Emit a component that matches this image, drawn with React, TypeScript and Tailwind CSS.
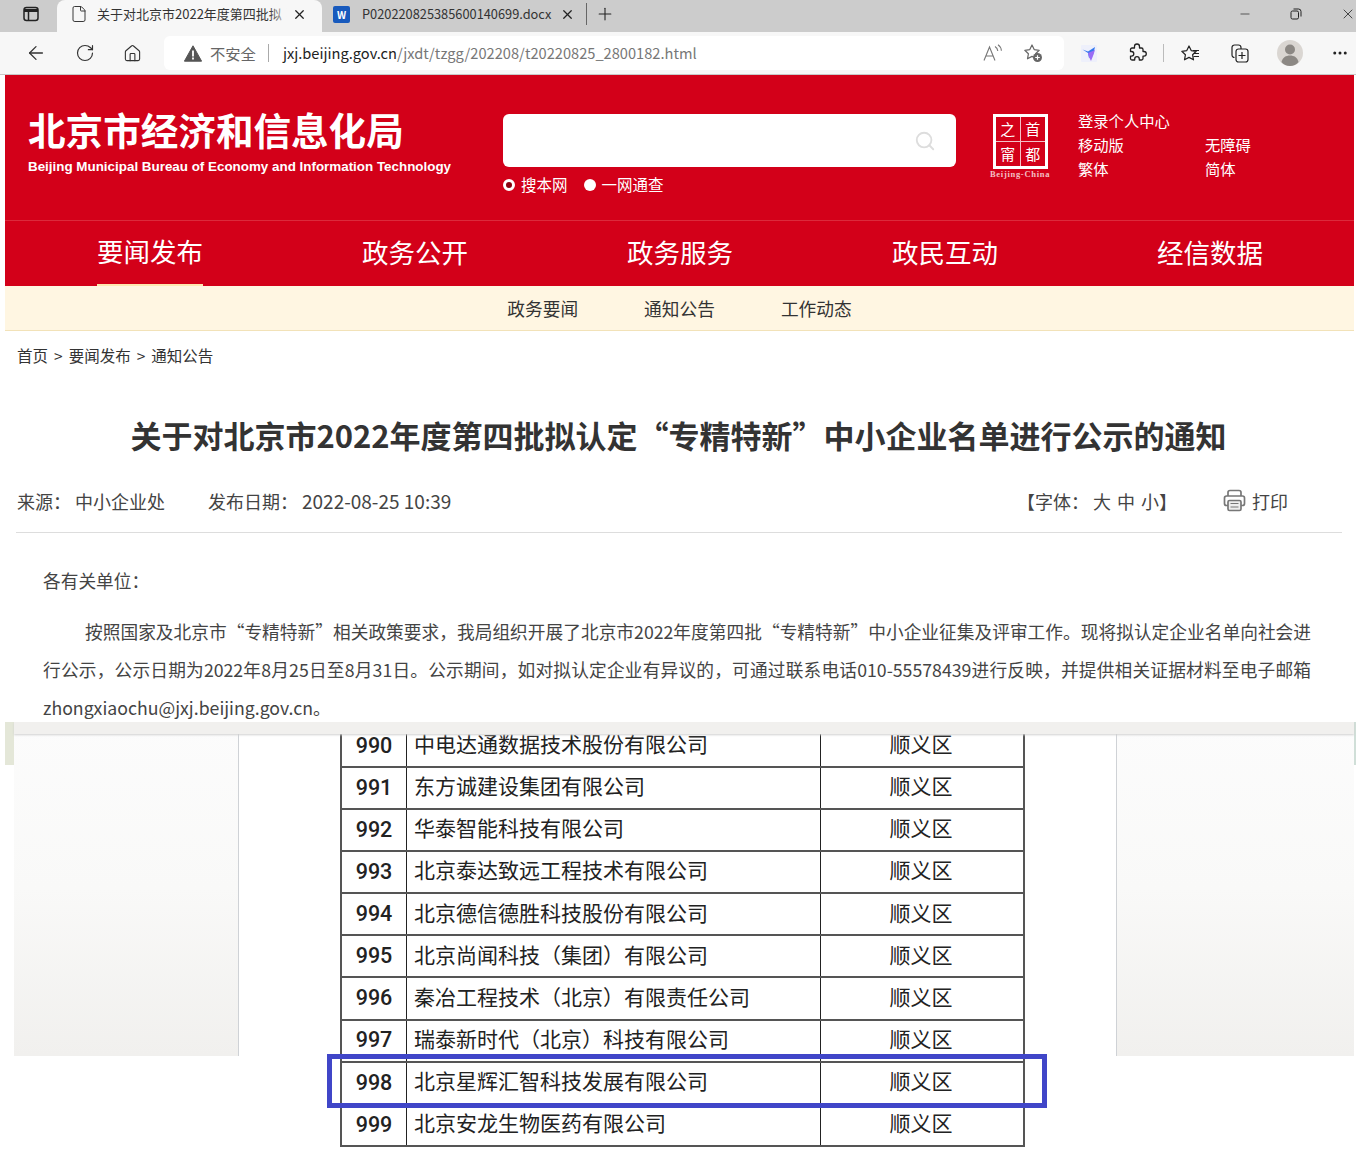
import { ArrowLeft, RotateCw, House, Ellipsis, Minus, Plus, X, File, Search } from 'lucide-react';

const FONT = '"Noto Sans CJK SC", "Liberation Sans", sans-serif';
const STAR = 'M9 2l2.2 4.6 5 .7-3.6 3.5.9 5L9 13.4 4.5 15.8l.9-5L1.8 7.3l5-.7z';
const navItems = ['要闻发布', '政务公开', '政务服务', '政民互动', '经信数据'];
const subNav = ['政务要闻', '通知公告', '工作动态'];
const rows = [
  ['990', '中电达通数据技术股份有限公司'],
  ['991', '东方诚建设集团有限公司'],
  ['992', '华泰智能科技有限公司'],
  ['993', '北京泰达致远工程技术有限公司'],
  ['994', '北京德信德胜科技股份有限公司'],
  ['995', '北京尚闻科技（集团）有限公司'],
  ['996', '秦冶工程技术（北京）有限责任公司'],
  ['997', '瑞泰新时代（北京）科技有限公司'],
  ['998', '北京星辉汇智科技发展有限公司'],
  ['999', '北京安龙生物医药有限公司'],
];

const TabListIcon = () => (
  <svg width="16" height="16" viewBox="0 0 16 16" fill="none" stroke="#222" strokeWidth="1.5">
    <rect x="1" y="1.5" width="14" height="13" rx="2.5" />
    <path d="M1 4.5h14" strokeWidth="3" />
    <path d="M5.5 4v10" />
  </svg>
);

const RestoreIcon = () => (
  <svg width="12" height="12" viewBox="0 0 12 12" fill="none" stroke="#222" strokeWidth="1">
    <rect x="1" y="3" width="7.5" height="8" rx="1.5" />
    <path d="M3.5 1h5a2.5 2.5 0 0 1 2.5 2.5V8.5" />
  </svg>
);

const WarningIcon = () => (
  <svg width="18" height="17" viewBox="0 0 18 17">
    <path d="M9 .8L17.6 16.2H.4z" fill="#555" stroke="#555" strokeLinejoin="round" />
    <path d="M8.1 5.5h1.8v6H8.1zM8.1 12.6h1.8v1.8H8.1z" fill="#fff" />
  </svg>
);

const ReadAloudIcon = () => (
  <svg width="20" height="18" viewBox="0 0 20 18" fill="none" stroke="#777" strokeWidth="1.1">
    <path d="M1 16.5L6.5 3l5.5 13.5M3 12h7" />
    <path d="M12 2.5c1.8 1 2.6 2.4 2.8 4.5M15 .8c2.2 1.4 3.2 3.2 3.4 6" />
  </svg>
);

const StarAddIcon = () => (
  <svg width="20" height="20" viewBox="0 0 20 20" fill="none">
    <path d={STAR} stroke="#666" strokeWidth="1.2" strokeLinejoin="round" />
    <circle cx="14.5" cy="14.5" r="4.5" fill="#666" />
    <path d="M14.5 12.2v4.6M12.2 14.5h4.6" stroke="#fff" strokeWidth="1.2" />
  </svg>
);

const BirdIcon = () => (
  <svg width="16" height="17" viewBox="0 0 16 17">
    <rect width="16" height="17" rx="1" fill="#eef0fb" />
    <path d="M1.5 4.5L7 6.5 14 2l-2 8-4 3-1-5z" fill="#3478f0" />
    <path d="M7 8l7-3-2 6-2 5-2-4z" fill="#9a6cf5" />
  </svg>
);

const ExtensionIcon = () => (
  <svg width="20" height="20" viewBox="0 0 20 20" fill="none" stroke="#222" strokeWidth="1.3" strokeLinejoin="round">
    <path d="M7.5 3.5a2.5 2.5 0 0 1 5 0V5h2a1.5 1.5 0 0 1 1.5 1.5v2h1a2.3 2.3 0 0 1 0 4.6h-1v2.4a1.5 1.5 0 0 1-1.5 1.5h-2.2v-1a2.3 2.3 0 0 0-4.6 0v1H5a1.5 1.5 0 0 1-1.5-1.5v-2.4h1a2.3 2.3 0 0 0 0-4.6h-1v-2A1.5 1.5 0 0 1 5 5h2.5z" />
  </svg>
);

const FavoritesIcon = () => (
  <svg width="20" height="18" viewBox="0 0 20 18" fill="none" stroke="#222" strokeWidth="1.2" strokeLinejoin="round">
    <path d={STAR} />
    <path d="M13 6.5h6M14 9.5h5M13.5 12.5h5.5" />
  </svg>
);

const CollectionsIcon = () => (
  <svg width="18" height="19" viewBox="0 0 18 19" fill="none" stroke="#222" strokeWidth="1.2">
    <path d="M3.5 13.5A2.5 2.5 0 0 1 1 11V3.5A2.5 2.5 0 0 1 3.5 1h4A2.5 2.5 0 0 1 10 3.5V5" />
    <rect x="5" y="5" width="12" height="13" rx="2.5" />
    <path d="M11 8v7M7.5 11.5h7" />
  </svg>
);

const AvatarIcon = () => (
  <svg width="26" height="26" viewBox="0 0 26 26">
    <ellipse cx="13" cy="13" rx="13" ry="13" fill="#dad6d2" />
    <circle cx="13" cy="9.5" r="5" fill="#8c8884" />
    <path d="M4.5 22c1-4.5 4.5-6.5 8.5-6.5s7.5 2 8.5 6.5c-2 2.5-5 4-8.5 4s-6.5-1.5-8.5-4z" fill="#8c8884" />
  </svg>
);

const PrintIcon = () => (
  <svg width="23" height="23" viewBox="0 0 23 23" fill="none" stroke="#777" strokeWidth="1.7" strokeLinejoin="round">
    <path d="M5 7V3.5A2 2 0 0 1 7 1.5h9a2 2 0 0 1 2 2V7" />
    <path d="M5 16.5H3.5a2 2 0 0 1-2-2V9a2 2 0 0 1 2-2h16a2 2 0 0 1 2 2v5.5a2 2 0 0 1-2 2H18" />
    <rect x="5" y="11.5" width="13" height="10" rx="1.5" fill="#eee" />
    <path d="M7.5 14.5h8M7.5 18h8" strokeWidth="1.2" />
  </svg>
);

const BrowserChrome = () => (
  <div className="h-[75px] w-full shrink-0 border-b border-[#c8c8c8] bg-[#f7f7f7]">
    <div className="flex h-8 items-end bg-[#cccccc] pl-[5px]">
      <div className="flex h-8 w-[52px] items-center justify-center pb-[4px]">
        <TabListIcon />
      </div>
      <div className="flex h-8 w-[265px] items-center rounded-t-lg bg-[#f7f7f7] pb-[4px] pl-[13px]">
        <File size={18} strokeWidth={1.3} className="text-[#333]" />
        <div className="relative ml-[9px] w-[194px]">
          <span className="block whitespace-nowrap text-[13px] leading-[18px] text-[#333]">关于对北京市2022年度第四批拟</span>
          <div className="absolute inset-y-0 right-0 w-[22px] bg-gradient-to-r from-transparent to-[#f7f7f7]" />
        </div>
        <X size={15} strokeWidth={2} className="ml-[1px] text-[#222]" />
      </div>
      <div className="flex h-8 items-center pb-[4px] pl-[11px]">
        <div className="flex h-[17px] w-[17px] items-center justify-center rounded-[2px] bg-[#185abd] text-[10px] font-bold text-white">W</div>
        <span className="ml-[12px] w-[198px] whitespace-nowrap text-[12.8px] text-[#333]">P020220825385600140699.docx</span>
        <X size={15} strokeWidth={2} className="text-[#222]" />
        <div className="ml-[11px] h-[22px] w-px bg-[#666]" />
        <Plus size={20} strokeWidth={1.3} className="ml-[8px] text-[#222]" />
      </div>
      <div className="ml-auto flex h-8 items-center gap-[38px] pb-[4px] text-[#222]">
        <Minus size={14} strokeWidth={1.2} />
        <RestoreIcon />
        <X size={16} strokeWidth={1.2} />
      </div>
    </div>
    <div className="flex h-[42px] items-center pl-[25px]">
      <ArrowLeft size={22} strokeWidth={1.4} className="text-[#333]" />
      <RotateCw size={20} strokeWidth={1.4} className="ml-[28px] text-[#333]" />
      <House size={19} strokeWidth={1.4} className="ml-[28px] text-[#333]" />
      <div className="ml-[22px] flex h-[34px] w-[900px] items-center rounded-md bg-white pl-[20px]">
        <WarningIcon />
        <span className="ml-[8px] text-[15.3px] text-[#666]">不安全</span>
        <div className="ml-[12px] h-[18px] w-px bg-[#aaa]" />
        <span className="ml-[14px] whitespace-nowrap text-[14.65px]"><span className="text-[#222]">jxj.beijing.gov.cn</span><span className="text-[#777]">/jxdt/tzgg/202208/t20220825_2800182.html</span></span>
        <div className="ml-auto flex items-center gap-[20px] pr-[21px]">
          <ReadAloudIcon />
          <StarAddIcon />
        </div>
      </div>
      <div className="ml-[17px]"><BirdIcon /></div>
      <div className="ml-[30px]"><ExtensionIcon /></div>
      <div className="ml-[16px] h-[18px] w-px bg-[#bbb]" />
      <div className="ml-[16px]"><FavoritesIcon /></div>
      <div className="ml-[31px]"><CollectionsIcon /></div>
      <div className="ml-[28px]"><AvatarIcon /></div>
      <Ellipsis size={18} className="ml-[28px] text-[#222]" />
    </div>
  </div>
);

const SiteHeader = () => (
  <div className="mx-[5px] w-[1349px]">
    <div className="flex h-[145px] bg-[#d30019] text-white">
      <div className="w-[498px] pl-[23px] pt-[30px]">
        <div className="whitespace-nowrap text-[37.6px] font-bold leading-[48px]">北京市经济和信息化局</div>
        <div className="mt-[4px] whitespace-nowrap text-[13.4px] font-bold" style={{ fontFamily: '"Liberation Sans", sans-serif' }}>Beijing Municipal Bureau of Economy and Information Technology</div>
      </div>
      <div className="w-[489px] pt-[39px]">
        <div className="flex h-[53px] w-[453px] items-center justify-end rounded-md bg-white pr-[20px]"><Search size={22} className="text-[#ddd]" /></div>
        <div className="mt-[6px] flex items-center text-[15.5px]">
          <span className="h-[12px] w-[12px] rounded-full border-[3px] border-white bg-[#8a0010]" />
          <span className="ml-[6px]">搜本网</span>
          <span className="ml-[16px] h-[12px] w-[12px] rounded-full bg-white" />
          <span className="ml-[6px]">一网通查</span>
        </div>
      </div>
      <div className="flex w-[86px] flex-col items-start pt-[39px]">
        <div className="ml-px grid h-[55px] w-[55px] grid-cols-2 border-[3px] border-white text-center text-[15px] leading-[24px]">
          <span className="border-b border-r border-[#f3c0c6]">之</span>
          <span className="border-b border-[#f3c0c6]">首</span>
          <span className="border-r border-[#f3c0c6]">甯</span>
          <span>都</span>
        </div>
        <div className="-ml-[2px] mt-px whitespace-nowrap text-[8.5px] font-bold leading-[9px] tracking-[0.7px] text-[#f3c0c6]" style={{ fontFamily: '"Liberation Serif", serif' }}>Beijing-China</div>
      </div>
      <div className="grid h-[72px] grid-cols-[127px_auto] pt-[33px] text-[15.3px] leading-[24px]">
        <span className="col-span-2">登录个人中心</span>
        <span>移动版</span><span>无障碍</span>
        <span>繁体</span><span>简体</span>
      </div>
    </div>
    <div className="flex h-[66px] justify-between border-t border-[#dc2a3c] bg-[#d30019] pl-[92px] pr-[91px] text-white">
      {navItems.map((item, i) => (
        <div key={item} className={`flex h-[65px] items-center pb-[4px] text-[26.5px] ${i === 0 ? 'border-b-2 border-[#ffe7b0]' : ''}`}>{item}</div>
      ))}
    </div>
    <div className="flex h-[45px] items-center justify-center gap-[66px] border-b border-[#f2e2b8] bg-[#fff6e2] text-[17.7px] text-[#333]">
      {subNav.map((s) => <span key={s}>{s}</span>)}
    </div>
  </div>
);

const Article = () => (
  <div className="h-[391px] w-full shrink-0 bg-white text-[#333]">
    <div className="flex h-[49px] items-center gap-[6px] pl-[17px] text-[15.5px]">
      <span>首页</span><span>&gt;</span><span>要闻发布</span><span>&gt;</span><span>通知公告</span>
    </div>
    <h1 className="mt-[30px] pl-px text-center text-[31px] font-bold leading-[50px]">关于对北京市2022年度第四批拟认定“专精特新”中小企业名单进行公示的通知</h1>
    <div className="ml-[16px] mr-[14px] mt-[27px] flex h-[46px] items-start border-b border-[#ddd] pl-px text-lg text-[#444]">
      <span>来源：</span><span className="ml-[4px]">中小企业处</span>
      <span className="ml-[43px]">发布日期：</span><span className="ml-[4px] text-[19px] leading-[28px]">2022-08-25 10:39</span>
      <span className="ml-auto">【字体：</span><span className="ml-[4px] [word-spacing:2px]">大 中 小】</span>
      <div className="ml-[46px] mt-[2px]"><PrintIcon /></div>
      <span className="ml-[6px] mr-[54px]">打印</span>
    </div>
    <div className="pl-[43px] pr-[45px] pt-[28px] text-[17.7px] leading-[38px] text-[#444]">
      <p className="mb-[13px]">各有关单位：</p>
      <p className="indent-[42px] text-justify">按照国家及北京市“专精特新”相关政策要求，我局组织开展了北京市2022年度第四批“专精特新”中小企业征集及评审工作。现将拟认定企业名单向社会进行公示，公示日期为2022年8月25日至8月31日。公示期间，如对拟认定企业有异议的，可通过联系电话010-55578439进行反映，并提供相关证据材料至电子邮箱zhongxiaochu@jxj.beijing.gov.cn。</p>
    </div>
  </div>
);

const TableRow = ({ num, name }: { num: string; name: string }) => (
  <div className="flex h-[40.1px] text-[21px] text-[#222]">
    <div className="flex w-[64px] items-center justify-center text-[21.5px] font-medium" style={{ fontFamily: 'Roboto, sans-serif' }}>{num}</div>
    <div className="flex w-[414px] items-center whitespace-nowrap border-l-[1.5px] border-[#222] pb-[4px] pl-[7px]">{name}</div>
    <div className="flex flex-1 items-center justify-center border-l-[1.5px] border-[#222] pb-[4px] pr-[2px]">顺义区</div>
  </div>
);

const DocView = () => (
  <div className="relative h-[446px] w-full overflow-hidden bg-white">
    <div className="ml-[14px] flex h-[334px] w-[1340px] bg-gradient-to-b from-[#fcfcfc] via-[#f9f9f8] to-[#f1f0ee]">
      <div className="ml-[224px] h-full w-[879px] border-x border-[#cfd2d6] bg-white" />
    </div>
    <div className="absolute left-[5px] top-0 h-[43px] w-[9px] bg-[#e4e7d8]" />
    <div className="absolute left-[1354px] top-0 h-[43px] w-[2px] bg-[#d0dfd8]" />
    <div className="absolute left-[14px] top-0 z-[3] h-[12px] w-[1340px] bg-[#f1f0ee] shadow-[0_1px_2px_#d0d0d0]" />
    <div className="absolute left-[340px] top-[12px] z-[1] w-[685px] border-x-2 border-b-2 border-[#555]">
      {rows.map(([num, name], i) => (
        i === 0 ? (
          <div key={num} className="flex h-[32px] flex-col">
            <div className="-mt-[8px] shrink-0"><TableRow num={num} name={name} /></div>
          </div>
        ) : (
          <div key={num} className="border-t-2 border-[#555]"><TableRow num={num} name={name} /></div>
        )
      ))}
    </div>
    <div className="absolute left-[327px] top-[332px] z-[2] h-[54px] w-[720px] border-[5px] border-[#4046c8]" />
  </div>
);

export default function App() {
  return (
    <div className="flex h-[1168px] w-[1356px] flex-col overflow-hidden bg-white" style={{ fontFamily: FONT }}>
      <BrowserChrome />
      <SiteHeader />
      <Article />
      <DocView />
    </div>
  );
}
